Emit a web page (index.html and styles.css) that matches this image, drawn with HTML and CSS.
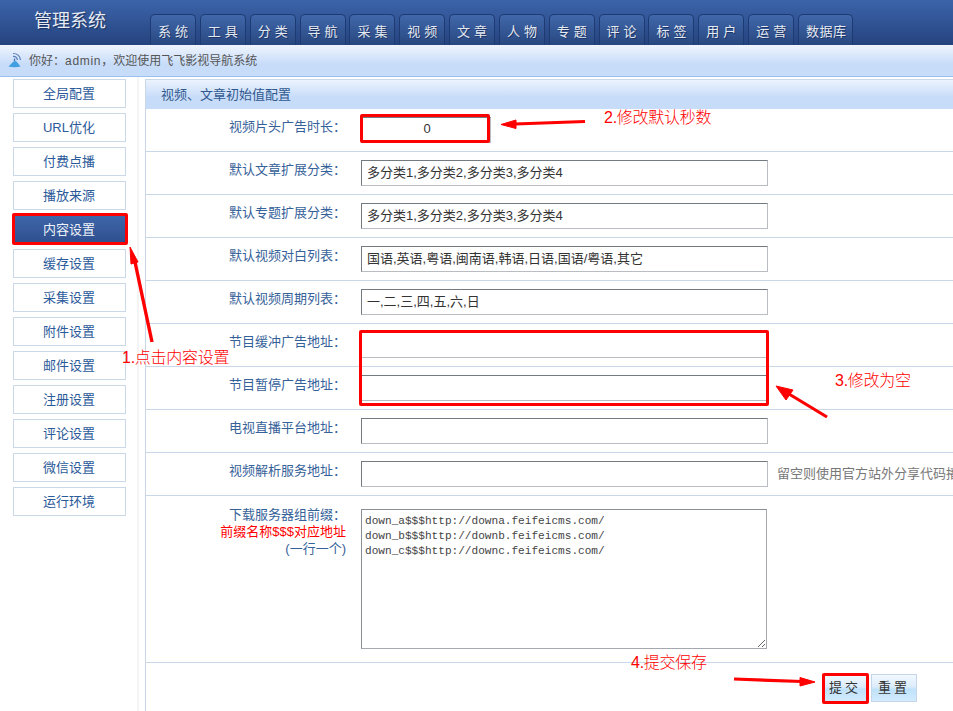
FILE: index.html
```html
<!DOCTYPE html>
<html lang="zh">
<head>
<meta charset="utf-8">
<title>管理系统</title>
<link rel="stylesheet" href="styles.css">
</head>
<body>
<div class="page">
  <header class="topbar">
    <div class="logo">管理系统</div>
    <nav class="tabs">
      <a class="tab">系统</a><a class="tab">工具</a><a class="tab">分类</a><a class="tab">导航</a><a class="tab">采集</a><a class="tab">视频</a><a class="tab">文章</a><a class="tab">人物</a><a class="tab">专题</a><a class="tab">评论</a><a class="tab">标签</a><a class="tab">用户</a><a class="tab">运营</a><a class="tab tab-wide">数据库</a>
    </nav>
  </header>
  <div class="notice">
    <svg class="notice-icon" width="14" height="16" viewBox="0 0 14 16">
      <path d="M0.500 14.500 L5.500 9.500 Q7 8.500 8.500 9.500 L12.500 14.500 Q6.500 16 0.500 14.500 Z" fill="#3f9fe0"/>
      <path d="M6.500 9 L6.500 6.500" stroke="#4a78b8" stroke-width="1.400" fill="none"/>
      <path d="M5 4.500 Q8.500 4 9.500 8" stroke="#5b7fb8" stroke-width="1.200" fill="none"/>
      <path d="M5 1.500 Q11.500 1.500 12.500 8" stroke="#5b7fb8" stroke-width="1.200" fill="none"/>
    </svg>
    <span>你好：<span class="user">admin</span>，欢迎使用飞飞影视导航系统</span>
  </div>
  <div class="main">
    <aside class="sidebar">
      <a class="side-item">全局配置</a>
      <a class="side-item">URL优化</a>
      <a class="side-item">付费点播</a>
      <a class="side-item">播放来源</a>
      <a class="side-item side-active">内容设置</a>
      <a class="side-item">缓存设置</a>
      <a class="side-item">采集设置</a>
      <a class="side-item">附件设置</a>
      <a class="side-item">邮件设置</a>
      <a class="side-item">注册设置</a>
      <a class="side-item">评论设置</a>
      <a class="side-item">微信设置</a>
      <a class="side-item">运行环境</a>
    </aside>
    <div class="strip"></div>
    <section class="panel">
      <h2 class="panel-title">视频、文章初始值配置</h2>
      <div class="row">
        <label class="row-label">视频片头广告时长<span class="colon">：</span></label>
        <input class="field field-short" value="0">
      </div>
      <div class="row">
        <label class="row-label">默认文章扩展分类<span class="colon">：</span></label>
        <input class="field" value="多分类1,多分类2,多分类3,多分类4">
      </div>
      <div class="row">
        <label class="row-label">默认专题扩展分类<span class="colon">：</span></label>
        <input class="field" value="多分类1,多分类2,多分类3,多分类4">
      </div>
      <div class="row">
        <label class="row-label">默认视频对白列表<span class="colon">：</span></label>
        <input class="field" value="国语,英语,粤语,闽南语,韩语,日语,国语/粤语,其它">
      </div>
      <div class="row">
        <label class="row-label">默认视频周期列表<span class="colon">：</span></label>
        <input class="field" value="一,二,三,四,五,六,日">
      </div>
      <div class="row">
        <label class="row-label">节目缓冲广告地址<span class="colon">：</span></label>
        <input class="field" value="">
      </div>
      <div class="row">
        <label class="row-label">节目暂停广告地址<span class="colon">：</span></label>
        <input class="field" value="">
      </div>
      <div class="row">
        <label class="row-label">电视直播平台地址<span class="colon">：</span></label>
        <input class="field" value="">
      </div>
      <div class="row">
        <label class="row-label">视频解析服务地址<span class="colon">：</span></label>
        <input class="field" value="">
        <span class="hint">留空则使用官方站外分享代码播放</span>
      </div>
      <div class="row row-tall">
        <label class="row-label row-label-multi">下载服务器组前缀<span class="colon">：</span><br><em class="label-red">前缀名称$$$对应地址</em><br>(一行一个)</label>
        <textarea class="area">down_a$$$http://downa.feifeicms.com/
down_b$$$http://downb.feifeicms.com/
down_c$$$http://downc.feifeicms.com/</textarea>
      </div>
      <div class="actions">
        <button class="btn">提交</button>
        <button class="btn">重置</button>
      </div>
    </section>
  </div>

  <div class="ring ring-menu"></div>
  <div class="ring ring-seconds"></div>
  <div class="ring ring-empty"></div>
  <div class="ring ring-submit"></div>
  <svg class="arrows" width="953" height="711" viewBox="0 0 953 711">
    <g fill="#f00" stroke="#f00">
      <path d="M152 342 L135 262" stroke-width="3.400" fill="none"/>
      <path d="M130 247 L138 262 L131 264 Z" stroke-width="1"/>
      <path d="M585 121.500 L515 124" stroke-width="3.200" fill="none"/>
      <path d="M501 124.500 L516 120 L516 128.500 Z" stroke-width="1"/>
      <path d="M827 417 L789 394" stroke-width="3.200" fill="none"/>
      <path d="M776 386 L793 390 L786 400 Z" stroke-width="1"/>
      <path d="M734 679 L802 681.500" stroke-width="3.200" fill="none"/>
      <path d="M815 682 L800 677.500 L800 686 Z" stroke-width="1"/>
    </g>
  </svg>
  <span class="note note-1">1.点击内容设置</span>
  <span class="note note-2">2.修改默认秒数</span>
  <span class="note note-3">3.修改为空</span>
  <span class="note note-4">4.提交保存</span>
</div>
</body>
</html>
```

FILE: styles.css
```css
* { box-sizing: border-box; }
html, body { margin: 0; padding: 0; height: 100%; background: #fff; }
body {
  font-family: "Liberation Sans", "Noto Sans CJK SC", sans-serif;
  font-size: 13px;
  color: #333;
  overflow: hidden;
}
.page { position: relative; width: 953px; height: 711px; overflow: hidden; }

.topbar {
  display: flex;
  height: 45px;
  padding-left: 34px;
  background: linear-gradient(#3c64aa, #25437e);
}
.logo {
  width: 116px;
  margin-top: 10px;
  font-size: 18px;
  line-height: 22px;
  color: #e6ebf3;
  text-shadow: 1px 1px 1px #1a2f5c;
}
.tabs { display: flex; gap: 3.85px; align-self: flex-end; }
.tab {
  display: block;
  width: 46px;
  height: 31px;
  padding-left: 7px;
  font-size: 13px;
  line-height: 33px;
  letter-spacing: 4px;
  white-space: nowrap;
  color: #e4eaf3;
  text-shadow: 1px 1px 0 #1d3566;
  background: linear-gradient(#4168ab, #28477f);
  border: 1px solid #1e3a72;
  border-bottom: 0;
  border-radius: 5px 5px 0 0;
}
.tab-wide { width: 55px; letter-spacing: 0.5px; }

.notice {
  display: flex;
  align-items: center;
  height: 32px;
  padding: 0 0 2px 8px;
  gap: 7px;
  font-size: 12px;
  color: #555;
  background: linear-gradient(#f0f5fe, #c7dcf9 62%);
  border-bottom: 1px solid #9cc1f1;
}
.notice-icon { flex: none; }
.user { letter-spacing: 0.7px; }

.main { display: flex; height: 634px; }
.sidebar {
  display: flex;
  flex-direction: column;
  gap: 5px;
  width: 137px;
  padding: 2px 0 0 13px;
}
.side-item {
  display: block;
  width: 113px;
  height: 29px;
  padding-right: 1px;
  font-size: 13px;
  line-height: 27px;
  text-align: center;
  color: #2b5a9a;
  border: 1px solid #cbd8e8;
}
.side-active {
  color: #eef2f8;
  background: linear-gradient(#3e66aa, #2f4f8e);
  border-color: #3a5c9c;
}
.strip { width: 2px; background: #f4f4f4; }

.panel {
  width: 808px;
  margin: 2px 0 0 6px;
  border-left: 1px solid #c9d7e8;
  flex: none;
}
.panel-title {
  height: 30px;
  margin: 0;
  padding-left: 15px;
  font-size: 13px;
  font-weight: normal;
  line-height: 29px;
  color: #30588f;
  border-top: 1px solid #c9d7e8;
  background: linear-gradient(#ecf3fe, #c7dcf9 60%);
}
.row {
  display: flex;
  align-items: flex-start;
  height: 43px;
  padding-top: 8px;
  border-bottom: 1px solid #c9d7e8;
}
.row-tall { height: 167px; padding-top: 13px; }
.row-label {
  flex: none;
  width: 200px;
  margin-right: 15px;
  font-size: 13px;
  line-height: 18px;
  text-align: right;
  color: #356199;
}
.row-label-multi { line-height: 17px; margin-top: -4px; }
.colon { font-family: "Noto Sans CJK TC", sans-serif; }
.label-red { font-style: normal; color: #f00; }
.field {
  flex: none;
  width: 407px;
  height: 26px;
  margin: 0;
  padding: 0 5px 4px;
  font-family: "Liberation Sans", "Noto Sans CJK SC", sans-serif;
  font-size: 13px;
  color: #333;
  background: #fff;
  border: 1px solid;
  border-color: #737a80 #b9bdc2 #b9bdc2 #737a80;
  outline: 0;
}
.field-short { width: 130px; padding-left: 7px; text-align: center; }
.hint {
  flex: none;
  margin-left: 9px;
  line-height: 26px;
  white-space: nowrap;
  color: #777;
}
.area {
  flex: none;
  display: block;
  width: 406px;
  height: 140px;
  margin: 0;
  padding: 4px 3px 3px;
  font-family: "Liberation Mono", "Noto Sans CJK SC", monospace;
  font-size: 11.1px;
  line-height: 15px;
  color: #444;
  background: #fff;
  border: 1px solid;
  border-color: #8a8f94 #a5a9ad #a5a9ad #8a8f94;
  outline: 0;
}
.actions { display: flex; gap: 3px; padding: 11px 0 0 676px; }
.btn {
  width: 46px;
  height: 28px;
  padding: 0 0 3px;
  font-family: "Liberation Sans", "Noto Sans CJK SC", sans-serif;
  font-size: 13px;
  letter-spacing: 3px;
  color: #333;
  background: linear-gradient(#f2f8fe 0%, #dcecfb 45%, #bfe2fb 55%, #d2ebfc 100%);
  border: 1px solid #c6d5ea;
}

/* screenshot annotations, laid over the page */
.ring {
  position: absolute;
  border: 3px solid #f00;
  border-radius: 2px;
}
.ring-menu { left: 12px; top: 213px; width: 116px; height: 32px; }
.ring-seconds { left: 360px; top: 114px; width: 130px; height: 29px; }
.ring-empty { left: 359px; top: 330px; width: 410px; height: 76px; }
.ring-submit { left: 822px; top: 673px; width: 47px; height: 31px; }
.arrows { position: absolute; left: 0; top: 0; pointer-events: none; }
.note {
  position: absolute;
  font-size: 16px;
  font-weight: 300;
  letter-spacing: -0.25px;
  line-height: 20px;
  white-space: nowrap;
  color: #f00;
}
.note-1 { left: 122px; top: 348px; }
.note-2 { left: 604px; top: 108px; }
.note-3 { left: 835px; top: 371px; }
.note-4 { left: 631px; top: 653px; }
```
